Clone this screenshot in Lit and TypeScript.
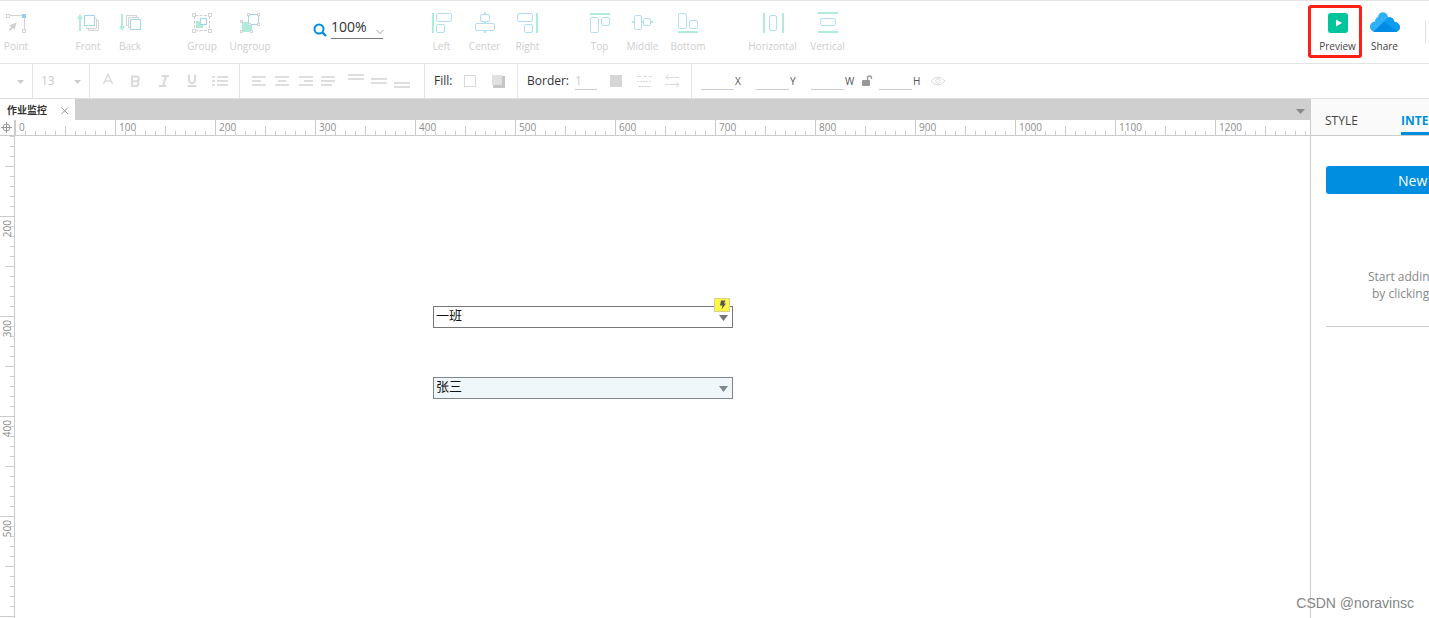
import { LitElement, html, css, svg } from "lit";
import { customElement, state } from "lit/decorators.js";

const G = "#b0ecdc";
const B = "#b2dff7";
const N = "#d4d4d4";

const bar = (x: number, y: number, w: number, h: number) =>
  svg`<rect x=${x} y=${y} width=${w} height=${h} fill=${G}></rect>`;
const box = (x: number, y: number, w: number, h: number, r = 1.5) =>
  svg`<rect x=${x} y=${y} width=${w} height=${h} rx=${r} fill="#fff" stroke=${B}></rect>`;
const node = (x: number, y: number, s = 3) =>
  svg`<rect x=${x} y=${y} width=${s} height=${s} fill="#fff" stroke=${N}></rect>`;

const toolIcons: Record<string, unknown> = {
  Point: svg`
    <path d="M9 4.500H23M24.500 7V18" stroke=${N} fill="none"></path>
    ${node(6.5, 3.5)}${node(22.5, 18.5)}
    <rect x="22" y="3" width="4" height="4" fill="#93cff2"></rect>
    <path d="M16.500 11.500L9 14.500L11.500 16L8.500 19L10 20L13 17L14.500 19Z" fill="#d0d0d0"></path>`,
  Front: svg`
    <path d="M16.500 17.500v2h10v-10h-2M14.500 15.500v2h10v-10h-2" stroke=${N} fill="none"></path>
    <rect x="12.500" y="4.500" width="10" height="10" fill="#fff" stroke="#9fd5f5"></rect>
    <path d="M7 20V8H5L8 3L11 8H9V20Z" fill=${G}></path>`,
  Back: svg`
    <path d="M14.500 14.500h-2v-10h10v2M16.500 16.500h-2v-10h10v2" stroke=${N} fill="none"></path>
    <rect x="16.500" y="8.500" width="10" height="10" fill="#fff" stroke="#9fd5f5"></rect>
    <path d="M7 3V15H5L8 20L11 15H9V3Z" fill=${G}></path>`,
  Group: svg`
    <path d="M9 4.500H23M9 19.500H23M8.500 5V19M23.500 5V19" stroke="#cfcfcf" stroke-dasharray="3 1.500" fill="none"></path>
    ${node(6.5, 2.5)}${node(22.5, 2.5)}${node(6.5, 18.5)}${node(22.5, 18.5)}
    <rect x="10" y="10" width="7" height="7" fill=${G}></rect>
    <rect x="14.500" y="7.500" width="6" height="6" fill="#fff" stroke="#9fd5f5"></rect>`,
  Ungroup: svg`
    <rect x="8" y="11" width="10" height="10" fill=${G}></rect>
    <rect x="14.500" y="3.500" width="10" height="10" fill="#fff" stroke="#9fd5f5"></rect>
    ${node(13.5, 2.5, 2)}${node(23.5, 2.5, 2)}${node(23.5, 12.5, 2)}${node(14.5, 12.5, 2)}
    ${node(6.5, 9.5, 2)}${node(6.5, 19.5, 2)}${node(16.5, 19.5, 2)}`,
  Left: svg`${bar(6, 2, 2, 20)}${box(10.5, 2.5, 15, 8)}${box(10.5, 13.5, 8, 8)}`,
  Center: svg`${bar(15, 1, 2, 21)}${box(11.5, 3.5, 9, 7)}${box(6.5, 12.5, 19, 7)}`,
  Right: svg`${bar(24, 2, 2, 20)}${box(5.5, 2.5, 15, 8)}${box(12.5, 13.5, 8, 8)}`,
  Top: svg`${bar(6, 2, 20, 2)}${box(6.5, 6.5, 8, 15)}${box(17.5, 6.5, 8, 8)}`,
  Middle: svg`${bar(5, 10, 21, 2)}${box(7.5, 4.5, 7, 14)}${box(16.5, 7.5, 7, 7)}`,
  Bottom: svg`${bar(6, 20, 20, 2)}${box(6.5, 2.5, 8, 15)}${box(17.5, 9.5, 8, 8)}`,
  Horizontal: svg`${bar(6, 2, 2, 20)}${bar(25, 2, 2, 20)}${box(12.5, 4.5, 7, 15)}`,
  Vertical: svg`${bar(6, 1, 20, 2)}${bar(6, 20, 20, 2)}${box(8.5, 7.5, 15, 7)}`,
  Preview: svg`
    <rect x="6" y="2" width="20" height="20" rx="3" fill="#00c49a"></rect>
    <path d="M14 8.500L20 12L14 15.500Z" fill="#fff"></path>`,
  Share: svg`
    <path d="M6 21A5 5 0 0 1 1 16A5 5 0 0 1 6 10.500A5 5 0 0 1 9 6A5 5 0 0 1 19 6.500A5 5 0 0 1 25.500 11A5.500 5.500 0 0 1 31 16A5 5 0 0 1 26 21Z" fill="#2fb0fb"></path>
    <path d="M15 10.500L19 6.500A5 5 0 0 1 25.500 11A5.500 5.500 0 0 1 31 16A5 5 0 0 1 28 20.500Z" fill="#0a9cf0"></path>
    <path d="M15 10.500L28.500 20.500Q27.500 21 26 21H6Q5 21 4.500 20.500Z" fill="#008ce2"></path>`,
};

const lines = (rows: [number, number, number][], h = 2) =>
  rows.map(([x, y, w]) => svg`<rect x=${x} y=${y} width=${w} height=${h} fill=${"#dedede"}></rect>`);

const formatIcons: [string, unknown][] = [
  ["Align left", lines([[0, 4, 14], [0, 8, 9], [0, 12, 14]])],
  ["Align center", lines([[0, 4, 14], [3, 8, 8], [0, 12, 14]])],
  ["Align right", lines([[1, 4, 14], [6, 8, 9], [1, 12, 14]])],
  ["Justify", lines([[0, 4, 14], [0, 8, 14], [0, 12, 11]])],
];
const verticalIcons: [string, unknown][] = [
  ["Align text top", lines([[0, 2, 16], [0, 6, 16]])],
  ["Align text middle", lines([[0, 6, 16], [0, 10, 16]])],
  ["Align text bottom", lines([[0, 10, 16], [0, 14, 16]])],
];

const toolGroups: { size: string; items: string[] }[] = [
  { size: "point", items: ["Point"] },
  { size: "order", items: ["Front", "Back"] },
  { size: "grouping", items: ["Group", "Ungroup"] },
];
const alignGroups: { size: string; items: string[] }[] = [
  { size: "align", items: ["Left", "Center", "Right"] },
  { size: "valign", items: ["Top", "Middle", "Bottom"] },
  { size: "distribute", items: ["Horizontal", "Vertical"] },
];

@customElement("app-root")
export class AppRoot extends LitElement {
  static styles = css`
    :host {
      display: flex;
      flex-direction: column;
      position: relative;
      height: 100vh;
      overflow: hidden;
      background: #fff;
      color: #333;
      font: 12px/16px "Open Sans", "Noto Sans", "Noto Sans CJK SC", sans-serif;
    }
    * { box-sizing: border-box; }
    button, input, select { font: inherit; color: inherit; margin: 0; padding: 0; border: 0; background: none; border-radius: 0; }
    select { appearance: none; }
    svg { display: block; flex: none; }

    .toolbar { display: flex; flex: none; height: 64px; border-top: 1px solid #e4e4e4; border-bottom: 1px solid #e4e4e4; }
    .tools { display: flex; flex: none; }
    .tool { display: flex; flex-direction: column; align-items: center; padding-top: 10px; gap: 4px; color: #cecece; font-size: 10px; line-height: 14px; white-space: nowrap; position: relative; }
    .tool.active { color: #444; }
    .point .tool { width: 32px; }
    .order { margin-left: 35px; }
    .order .tool { width: 42px; }
    .grouping { margin-left: 27px; }
    .grouping .tool { width: 48px; }
    .align { margin-left: 33px; }
    .align .tool, .valign .tool { width: 43px; }
    .valign { margin-left: 29px; }
    .valign .tool:last-child { width: 48px; }
    .distribute { margin-left: 33px; }
    .distribute .tool { width: 55px; }
    .output { margin-left: auto; padding-right: 17px; }
    .output .tool { width: 47px; }
    .highlight { position: absolute; left: -6px; top: 4px; width: 54px; height: 53px; border: 3px solid #ff1f14; border-radius: 3px; }
    .rule { width: 1px; height: 24px; margin: 19px 3px 0 0; background: #e0e0e0; }

    .zoom { display: flex; align-items: flex-start; gap: 4px; margin-left: 39px; padding-top: 16px; width: 74px; }
    .zoom svg.lens { margin-top: 6px; }
    .pick { position: relative; display: block; }
    .pick svg { position: absolute; pointer-events: none; }
    .zoom select { width: 52px; height: 22px; padding-bottom: 2px; border-bottom: 1px solid #777; font-size: 14px; line-height: 18px; }
    .zoom .pick svg { right: -1px; top: 12px; }

    .format { display: flex; flex: none; height: 35px; border-bottom: 1px solid #ddd; }
    .section { display: flex; align-items: center; flex: none; border-right: 1px solid #e4e4e4; }
    .section:last-child { border-right: 0; }
    .format select { height: 20px; color: #ccc; }
    .family select { width: 32px; }
    .size select { width: 48px; margin-left: 8px; }
    .format .pick svg { right: 8px; top: 9px; }
    .glyphs { padding: 0 5px 0 4px; }
    .icon { display: flex; align-items: center; justify-content: center; width: 28px; height: 24px; color: #dadada; }
    .narrow .icon { width: 23px; }
    .narrow { padding: 0 11px 0 8px; }
    .gap { margin-left: 4px; }
    .fill { padding: 0 5px 0 9px; }
    .fill .caption { width: 22px; }
    .border { padding: 0 5px 0 9px; }
    .border .caption { width: 48px; }
    .line { height: 17px; border-bottom: 1px solid #ccc; }
    .border .line { width: 22px; margin-right: 5px; color: #ccc; }
    .coords { padding-left: 9px; }
    .field { display: flex; align-items: center; gap: 1px; width: 45px; color: #555; font-size: 10px; }
    .field.wide { width: 55px; }
    .field .line { width: 33px; }
    .lock { width: 23px; }

    .main { display: flex; flex: 1; min-height: 0; }
    .editor { display: flex; flex-direction: column; flex: 1; min-width: 0; }
    .tabs { display: flex; align-items: stretch; justify-content: space-between; flex: none; height: 21px; background: #cfcfcf; }
    .tab { display: flex; align-items: center; gap: 13px; padding-left: 7px; width: 75px; background: #fff; color: #333; font-size: 10px; line-height: 18px; font-weight: 700; white-space: nowrap; }
    .tab button { padding-top: 2px; }
    .more { padding: 3px 5px 0 0; }
    .hrow { display: flex; flex: none; height: 16px; border-bottom: 1px solid #ccc; }
    .origin { width: 15px; flex: none; border-right: 1px solid #ccc; }
    .hruler { display: flex; flex: 1; min-width: 0; overflow: hidden; color: #8c8c8c; font-size: 10px; line-height: 15px; }
    .hseg {
      flex: none; width: 100px; height: 15px; padding-left: 4px;
      background:
        linear-gradient(#ccc, #ccc) 0 0 / 1px 15px no-repeat,
        linear-gradient(#ccc, #ccc) 50px 6px / 1px 9px no-repeat,
        repeating-linear-gradient(90deg, #ccc 0 1px, transparent 1px 10px) 0 11px / 100px 4px no-repeat;
    }
    .work { display: flex; flex: 1; min-height: 0; }
    .vruler { flex: none; width: 15px; overflow: hidden; border-right: 1px solid #ccc; color: #8c8c8c; font-size: 10px; line-height: 14px; }
    .vseg {
      height: 100px; padding-top: 4px;
      background:
        linear-gradient(#ccc, #ccc) 0 0 / 14px 1px no-repeat,
        linear-gradient(#ccc, #ccc) 5px 50px / 9px 1px no-repeat,
        repeating-linear-gradient(180deg, #ccc 0 1px, transparent 1px 10px) 10px 0 / 4px 100px no-repeat;
    }
    .vseg:first-child { margin-top: -20px; }
    .vseg span { display: block; width: 14px; writing-mode: vertical-rl; transform: rotate(180deg); }
    .canvas { position: relative; flex: 1; min-width: 0; }
    .widget { position: absolute; left: 418px; width: 300px; }
    .widget select { display: block; width: 100%; height: 22px; padding: 0 2px 4px; border: 1px solid #777; color: #111; font-size: 13px; line-height: 16px; }
    .widget svg { position: absolute; right: 5px; top: 9px; pointer-events: none; }
    .team { top: 170px; }
    .person { top: 241px; }
    .person select { background: #eff7fa; border-color: #7f888c; }
    .widget .bolt { position: absolute; right: 3px; top: -8px; width: 16px; height: 14px; border: 1px solid #d5d28a; background: #fff647; }
    .widget .bolt svg { right: 2px; top: 1px; }

    .panel { flex: none; width: 119px; overflow: hidden; border-left: 1px solid #ccc; white-space: nowrap; }
    .ptabs { display: flex; height: 37px; border-bottom: 1px solid #ccc; background: #fafafa; padding-left: 14px; }
    .ptabs button { flex: none; width: 76px; text-align: left; padding-top: 7px; color: #444; }
    .ptabs .current { color: #008ee0; font-weight: 700; border-bottom: 3px solid #008ee0; padding-top: 10px; }
    .pbody { padding: 30px 0 0 15px; }
    .new { display: block; width: 100%; height: 28px; padding: 1px 0 0 72px; border-radius: 3px 0 0 3px; background: #008ee0; color: #fff; font-size: 14px; text-align: left; }
    .hint { margin: 0; padding: 74px 0 24px 42px; border-bottom: 1px solid #ccc; color: #888; line-height: 17px; }
    .hint span { display: block; }
    .hint .second { padding-left: 4px; }
    .mark { position: absolute; right: 15px; bottom: 6px; color: #858585; font: 14px/18px "Liberation Sans", Arial, sans-serif; }
  `;

  @state() private columns = 1;
  @state() private rows = 1;

  private measure = () => {
    this.columns = Math.ceil((window.innerWidth - 134) / 100);
    this.rows = Math.ceil((window.innerHeight - 116) / 100);
  };

  connectedCallback() {
    super.connectedCallback();
    this.measure();
    window.addEventListener("resize", this.measure);
  }

  disconnectedCallback() {
    window.removeEventListener("resize", this.measure);
    super.disconnectedCallback();
  }

  private tool(name: string, active = false) {
    return html`<button class="tool ${active ? "active" : ""}">
      <svg width="32" height="24" viewBox="0 0 32 24" aria-hidden="true">${toolIcons[name]}</svg>
      <span>${name}</span>
      ${name === "Preview" ? html`<span class="highlight"></span>` : ""}
    </button>`;
  }

  private groups(list: { size: string; items: string[] }[]) {
    return list.map((g) => html`<div class="tools ${g.size}">${g.items.map((n) => this.tool(n))}</div>`);
  }

  private icon(label: string, shape: unknown, extra = "") {
    return html`<button class="icon ${extra}" aria-label=${label}>
      <svg width="16" height="18" viewBox="0 0 16 18">${shape}</svg>
    </button>`;
  }

  private caret(color: string, w = 9, h = 5) {
    return html`<svg width=${w} height=${h} viewBox="0 0 10 6" preserveAspectRatio="none" aria-hidden="true"><path d="M0 0H10L5 6Z" fill=${color}></path></svg>`;
  }

  private field(name: string, wide = false) {
    return html`<label class="field ${wide ? "wide" : ""}"><input class="line" type="text" />${name}</label>`;
  }

  render() {
    const g = "#dadada";
    return html`
      <header class="toolbar">
        ${this.groups(toolGroups)}
        <div class="zoom">
          <svg class="lens" width="14" height="14" viewBox="0 0 14 14" aria-hidden="true">
            <circle cx="6" cy="6" r="4.500" fill="none" stroke="#008ee0" stroke-width="2"></circle>
            <path d="M9.500 9.500L13 13" stroke="#008ee0" stroke-width="2.400"></path>
          </svg>
          <span class="pick">
            <select aria-label="Zoom"><option>100%</option></select>
            <svg width="8" height="6" viewBox="0 0 8 6"><path d="M.5 1L4 4.500L7.500 1" fill="none" stroke="#ccc" stroke-width="1.500"></path></svg>
          </span>
        </div>
        ${this.groups(alignGroups)}
        <div class="tools output">${this.tool("Preview", true)}${this.tool("Share", true)}</div>
        <span class="rule"></span>
      </header>

      <div class="format">
        <div class="section family">
          <span class="pick"><select aria-label="Font"><option></option></select>${this.caret("#ccc", 7, 4)}</span>
        </div>
        <div class="section size">
          <span class="pick"><select aria-label="Font size"><option>13</option></select>${this.caret("#ccc", 7, 4)}</span>
        </div>
        <div class="section glyphs">
          ${this.icon("Text color", svg`<path d="M3.500 12L8 2.500L12.500 12M5 9H11" fill="none" stroke=${g} stroke-width="1.400"></path>`)}
          ${this.icon("Bold", svg`<path d="M4 4.500H8.500A2.300 2.300 0 0 1 8.500 9.200H4ZM4 9.200H9A2.600 2.600 0 0 1 9 14H4Z" fill="none" stroke=${g} stroke-width="2"></path>`)}
          ${this.icon("Italic", svg`<path d="M5.500 4H13M3 14H10M10 4L7 14" fill="none" stroke=${g} stroke-width="2.200"></path>`)}
          ${this.icon("Underline", svg`<path d="M5 3V8A3 3 0 0 0 11 8V3" fill="none" stroke=${g} stroke-width="2"></path><path d="M3.500 14H12.500" stroke=${g} stroke-width="2"></path><path d="M3.500 3.500H6M10 3.500H12.500" stroke=${g}></path>`)}
          ${this.icon("Bullets", lines([[0, 4, 3], [5, 4, 11], [0, 8, 3], [5, 8, 11], [0, 12, 3], [5, 12, 11]]))}
        </div>
        <div class="section narrow">
          ${formatIcons.map(([l, s]) => this.icon(l, s))}
          ${verticalIcons.map(([l, s], i) => this.icon(l, s, i === 0 ? "gap" : ""))}
        </div>
        <div class="section fill">
          <span class="caption">Fill:</span>
          ${this.icon("Fill color", svg`<rect x="2.500" y="3.500" width="11" height="11" fill="#fff" stroke="#d9d9d9"></rect>`)}
          ${this.icon("Shadow", svg`<path d="M3 4H15V16H3Z" fill="#c6c6c6"></path><path d="M2 3H12V13H2Z" fill="#e0e0e0"></path>`)}
        </div>
        <div class="section border">
          <label class="caption" for="stroke">Border:</label>
          <input id="stroke" class="line" type="text" value="1" />
          ${this.icon("Border color", svg`<rect x="2" y="3" width="12" height="12" fill="#d6d6d6"></rect>`)}
          ${this.icon("Border style", svg`<path d="M1 4.500H16" stroke=${g} stroke-dasharray="4 2"></path><path d="M1 9.500H16" stroke=${g} stroke-dasharray="2 1"></path><path d="M2 14.500H15" stroke=${g}></path>`)}
          ${this.icon("Arrow style", svg`<path d="M2 5.500H15M4.500 3L2 5.500L4.500 8M1 12.500H15M12 10L15 12.500L12 15" fill="none" stroke=${g}></path>`)}
        </div>
        <div class="section coords">
          ${this.field("X", true)}${this.field("Y", true)}${this.field("W")}
          ${this.icon("Lock aspect ratio", svg`<rect x="2" y="8" width="8" height="6" rx="1" fill="#999"></rect><path d="M7.500 8V6A2 2 0 0 1 11.500 6V7" fill="none" stroke="#999" stroke-width="1.400"></path>`, "lock")}
          ${this.field("H")}
          ${this.icon("Visibility", svg`<path d="M1 9Q8 1 15 9Q8 17 1 9Z" fill="none" stroke=${g}></path><circle cx="8" cy="9" r="2.300" fill="none" stroke=${g}></circle>`)}
        </div>
      </div>

      <div class="main">
        <div class="editor">
          <div class="tabs">
            <div class="tab">作业监控
              <button aria-label="Close tab"><svg width="9" height="9" viewBox="0 0 9 9"><path d="M1.500 1.500L8 8M8 1.500L1.500 8" stroke="#999"></path></svg></button>
            </div>
            <button class="more" aria-label="More tabs">${this.caret("#8a8a8a")}</button>
          </div>
          <div class="hrow">
            <div class="origin"><svg width="14" height="15" viewBox="0 0 14 15"><circle cx="6.500" cy="7.500" r="3.500" fill="none" stroke="#999"></circle><path d="M1 7.500H12M6.500 2V13" stroke="#999"></path></svg></div>
            <div class="hruler">${Array.from({ length: this.columns }, (_, i) => html`<div class="hseg">${i * 100}</div>`)}</div>
          </div>
          <div class="work">
            <div class="vruler">${Array.from({ length: this.rows }, (_, i) => html`<div class="vseg">${i > 0 && i < this.rows - 1 ? html`<span>${(i + 1) * 100}</span>` : ""}</div>`)}</div>
            <div class="canvas">
              <div class="widget team">
                <select aria-label="Team"><option>一班</option></select>${this.caret("#777", 9, 6)}
                <span class="bolt"><svg width="9" height="10" viewBox="0 0 9 10"><path d="M3 0.500H7.500L6 3.500H8L3.500 9.500L4.500 5.500H2Z" fill="#555"></path></svg></span>
              </div>
              <div class="widget person">
                <select aria-label="Person"><option>张三</option></select>${this.caret("#7f888c", 9, 6)}
              </div>
            </div>
          </div>
        </div>
        <aside class="panel">
          <div class="ptabs"><button>STYLE</button><button class="current">INTER</button></div>
          <div class="pbody">
            <button class="new">New</button>
            <p class="hint"><span>Start adding</span><span class="second">by clicking</span></p>
          </div>
        </aside>
      </div>
      <div class="mark">CSDN @noravinsc</div>
    `;
  }
}
